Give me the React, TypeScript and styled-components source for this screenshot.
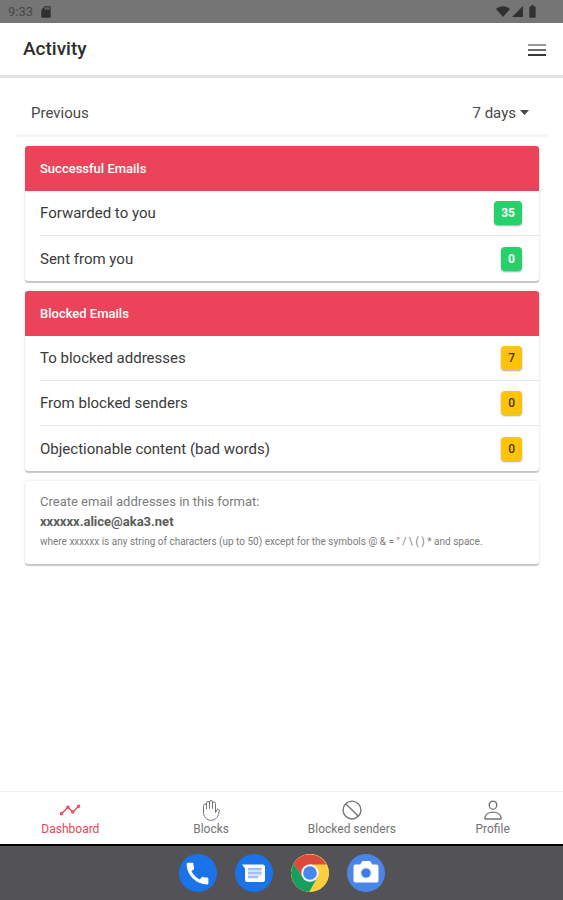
import React from "react";
import styled, { createGlobalStyle } from "styled-components";
import { IoAnalyticsOutline, IoBanOutline, IoPersonOutline } from "react-icons/io5";
import { MdBatteryFull, MdCall, MdSdCard, MdSignalCellular4Bar } from "react-icons/md";

const GlobalStyle = createGlobalStyle`
  *, *::before, *::after { box-sizing: border-box; }
  body { margin: 0; background: #fff; color: #3a3a3a; font-family: Roboto, "Liberation Sans", sans-serif; }
  button, select { font: inherit; color: inherit; border: 0; background: none; padding: 0; }
  h1, h2, p, ul { margin: 0; padding: 0; }
  svg { display: block; }
`;

const Screen = styled.div`
  min-height: 100vh;
  display: flex;
  flex-direction: column;
`;

const StatusBar = styled.div`
  height: 23px;
  padding: 0 23px 0 8px;
  display: flex;
  align-items: center;
  justify-content: space-between;
  background: #757575;
  color: #303030;
  font-size: 13px;
`;

const StatusGroup = styled.div<{ $gap: number }>`
  display: flex;
  align-items: center;
  gap: ${(p) => p.$gap}px;
`;

const Clock = styled.span`
  color: #484848;
`;

const Header = styled.header`
  height: 55px;
  padding: 0 17px 0 23px;
  display: flex;
  align-items: center;
  justify-content: space-between;
  border-bottom: 3px solid #e2e2e2;
`;

const Title = styled.h1`
  font-size: 19px;
  line-height: 24px;
  font-weight: 500;
  color: #2e2e2e;
`;

const MenuButton = styled.button`
  width: 18px;
  height: 24px;
  display: grid;
  place-items: center;
`;

const Main = styled.main`
  flex: 1;
  padding: 13px 24px 16px 25px;
  display: flex;
  flex-direction: column;
`;

const PeriodRow = styled.div`
  height: 46px;
  margin: 0 -9px 9px;
  padding: 0 19px 0 15px;
  display: flex;
  align-items: center;
  justify-content: space-between;
  border-bottom: 3px solid #f6f6f6;
  font-size: 15px;
  line-height: 20px;
  color: #484848;
`;

const SelectWrap = styled.div`
  display: flex;
  align-items: center;
  gap: 4px;
`;

const PeriodSelect = styled.select`
  appearance: none;
  width: 60px;
  text-align: right;
  text-align-last: right;
`;

const Card = styled.section`
  border-radius: 3px;
  background: #fff;
  box-shadow: 0 2px 1px rgba(0, 0, 0, 0.2), 0 0 3px rgba(0, 0, 0, 0.13);
`;

const StatCard = styled(Card)`
  margin-bottom: 10px;
`;

const CardHeading = styled.h2`
  height: 45px;
  padding: 0 15px;
  display: flex;
  align-items: center;
  border-radius: 3px 3px 0 0;
  background: #eb445a;
  color: #fff;
  font-size: 13px;
  font-weight: 500;
`;

const StatList = styled.ul`
  list-style: none;
  padding-left: 15px;
`;

const StatRow = styled.li`
  height: 45px;
  padding-right: 17px;
  display: flex;
  align-items: center;
  justify-content: space-between;
  font-size: 15px;
  line-height: 20px;
  &:not(:last-child) { border-bottom: 1px solid #e8e8e8; }
`;

const Badge = styled.span<{ $tone: "success" | "warning" }>`
  height: 24px;
  padding: 0 7px;
  display: grid;
  place-items: center;
  border-radius: 4px;
  background: ${(p) => (p.$tone === "success" ? "#28d06c" : "#ffc409")};
  color: ${(p) => (p.$tone === "success" ? "#fff" : "#453500")};
  font-size: 12px;
  font-weight: ${(p) => (p.$tone === "success" ? 700 : 500)};
  box-shadow: 0 1px 2px rgba(0, 0, 0, 0.35);
`;

const InfoCard = styled(Card)`
  padding: 11px 15px 12px;
  color: #7c7c7c;
`;

const InfoText = styled.p`
  font-size: 13px;
  line-height: 20px;
`;

const InfoAddress = styled.p`
  font-size: 13px;
  line-height: 20px;
  font-weight: 700;
  color: #5c5c5c;
`;

const InfoNote = styled.p`
  font-size: 10px;
  line-height: 20px;
`;

const TabBar = styled.nav`
  height: 53px;
  display: grid;
  grid-template-columns: repeat(4, 1fr);
  border-top: 1px solid #ececec;
`;

const Tab = styled.a<{ $active?: boolean }>`
  padding-top: 7px;
  display: flex;
  flex-direction: column;
  align-items: center;
  color: ${(p) => (p.$active ? "#eb445a" : "#747474")};
  font-size: 12px;
  line-height: 16px;
  text-decoration: none;
`;

const Dock = styled.footer`
  height: 56px;
  display: flex;
  align-items: center;
  justify-content: center;
  gap: 18px;
  border-top: 2px solid #000;
  background: #535256;
`;

const AppButton = styled.button<{ $color: string }>`
  width: 38px;
  height: 38px;
  display: grid;
  place-items: center;
  border-radius: 50%;
  overflow: hidden;
  background: ${(p) => p.$color};
  color: #fff;
`;

type Stat = { label: string; value: number };

const successful: Stat[] = [
  { label: "Forwarded to you", value: 35 },
  { label: "Sent from you", value: 0 },
];

const blocked: Stat[] = [
  { label: "To blocked addresses", value: 7 },
  { label: "From blocked senders", value: 0 },
  { label: "Objectionable content (bad words)", value: 0 },
];

function HandIcon({ size }: { size: number }) {
  return (
    <svg
      width={size}
      height={size}
      viewBox="0 0 22 22"
      fill="none"
      stroke="currentColor"
      strokeLinecap="round"
      strokeLinejoin="round"
      aria-hidden="true"
    >
      <path d="M3.500 13V6.500a1.500 1.500 0 0 1 3 0V10V4a1.500 1.500 0 0 1 3 0V9.500V3a1.500 1.500 0 0 1 3 0V9.500V4.500a1.500 1.500 0 0 1 3 0V13.500L17 10.500a1.400 1.400 0 0 1 2.300 1.300C18.500 17 16.500 21.300 11 21.300C6.500 21.300 3.500 18 3.500 13Z" />
    </svg>
  );
}

const tabs = [
  { label: "Dashboard", href: "#dashboard", Icon: IoAnalyticsOutline },
  { label: "Blocks", href: "#blocks", Icon: HandIcon },
  { label: "Blocked senders", href: "#blocked-senders", Icon: IoBanOutline },
  { label: "Profile", href: "#profile", Icon: IoPersonOutline },
];

function Stats({ title, tone, items }: { title: string; tone: "success" | "warning"; items: Stat[] }) {
  return (
    <StatCard>
      <CardHeading>{title}</CardHeading>
      <StatList>
        {items.map((item) => (
          <StatRow key={item.label}>
            <span>{item.label}</span>
            <Badge $tone={tone}>{item.value}</Badge>
          </StatRow>
        ))}
      </StatList>
    </StatCard>
  );
}

function WifiIcon() {
  return (
    <svg width="14" height="11" viewBox="0 0 14 11" fill="currentColor" aria-hidden="true">
      <path d="M7 11 0 3C4-.8 10-.8 14 3Z" />
    </svg>
  );
}

function MenuIcon() {
  return (
    <svg width="18" height="13" viewBox="0 0 18 13" aria-hidden="true">
      <path d="M0 2h18" stroke="#999" strokeWidth="2" />
      <path d="M0 7h18" stroke="#6c6c6c" strokeWidth="2" />
      <path d="M0 12h18" stroke="#383838" strokeWidth="2" />
    </svg>
  );
}

function MessagesIcon() {
  return (
    <svg width="38" height="38" viewBox="0 0 38 38" aria-hidden="true">
      <path d="M7 10.500h20.500a2.500 2.500 0 0 1 2.500 2.500v12.500a2.500 2.500 0 0 1-2.500 2.500h-15a2.500 2.500 0 0 1-2.500-2.500V14.500Z" fill="#fff" />
      <path d="M13 13.500h13.500v8.500h-3v2.500H13Z" fill="#d3e0fb" />
      <path d="M13 15h13.500M13 19h13.500M13 23h10" stroke="#a3bff5" strokeWidth="2" />
    </svg>
  );
}

function ChromeIcon() {
  return (
    <svg width="38" height="38" viewBox="0 0 38 38" aria-hidden="true">
      <circle cx="19" cy="19" r="19" fill="#ffcd40" />
      <path d="M2.550 9.500A19 19 0 0 1 35.450 10.400H19L11.600 23.200Z" fill="#db4a3c" />
      <path d="M2.550 9.500A19 19 0 0 0 18.200 38L26.400 23.200 19 27.500 11.600 23.200Z" fill="#17a05d" />
      <circle cx="19" cy="19" r="8.700" fill="#f1f1f1" />
      <circle cx="19" cy="19" r="6.800" fill="#4688f1" />
    </svg>
  );
}

function CameraIcon() {
  return (
    <svg width="38" height="38" viewBox="0 0 38 38" aria-hidden="true">
      <path d="M8.500 10.500h4.700L15.500 7h7.500l2.300 3.500h4.200a2 2 0 0 1 2 2v14a2 2 0 0 1-2 2h-21a2 2 0 0 1-2-2v-14a2 2 0 0 1 2-2Z" fill="#fff" />
      <circle cx="19" cy="19" r="6" fill="#dfe8fa" />
      <circle cx="19" cy="19" r="4.600" fill="#3d7be0" />
    </svg>
  );
}

export default function App() {
  return (
    <>
      <GlobalStyle />
      <Screen>
        <StatusBar>
          <StatusGroup $gap={6}>
            <Clock>9:33</Clock>
            <MdSdCard size={14} />
          </StatusGroup>
          <StatusGroup $gap={1}>
            <WifiIcon />
            <MdSignalCellular4Bar size={13} />
            <MdBatteryFull size={15} />
          </StatusGroup>
        </StatusBar>
        <Header>
          <Title>Activity</Title>
          <MenuButton type="button" aria-label="Menu">
            <MenuIcon />
          </MenuButton>
        </Header>
        <Main>
          <PeriodRow>
            <label htmlFor="period">Previous</label>
            <SelectWrap>
              <PeriodSelect id="period" defaultValue="7">
                <option value="7">7 days</option>
                <option value="30">30 days</option>
              </PeriodSelect>
              <svg width="9" height="5" viewBox="0 0 9 5" fill="currentColor" aria-hidden="true">
                <path d="M0 0h9L4.500 5Z" />
              </svg>
            </SelectWrap>
          </PeriodRow>
          <Stats title="Successful Emails" tone="success" items={successful} />
          <Stats title="Blocked Emails" tone="warning" items={blocked} />
          <InfoCard>
            <InfoText>Create email addresses in this format:</InfoText>
            <InfoAddress>xxxxxx.alice@aka3.net</InfoAddress>
            <InfoNote>
              {'where xxxxxx is any string of characters (up to 50) except for the symbols @ & = " / \\ ( ) * and space.'}
            </InfoNote>
          </InfoCard>
        </Main>
        <TabBar>
          {tabs.map(({ label, href, Icon }, i) => (
            <Tab key={label} href={href} $active={i === 0} aria-current={i === 0 ? "page" : undefined}>
              <Icon size={22} />
              {label}
            </Tab>
          ))}
        </TabBar>
        <Dock>
          <AppButton type="button" aria-label="Phone" $color="#1a73e8">
            <MdCall size={29} />
          </AppButton>
          <AppButton type="button" aria-label="Messages" $color="#1a73e8">
            <MessagesIcon />
          </AppButton>
          <AppButton type="button" aria-label="Chrome" $color="#ffcd40">
            <ChromeIcon />
          </AppButton>
          <AppButton type="button" aria-label="Camera" $color="#4a86ea">
            <CameraIcon />
          </AppButton>
        </Dock>
      </Screen>
    </>
  );
}
